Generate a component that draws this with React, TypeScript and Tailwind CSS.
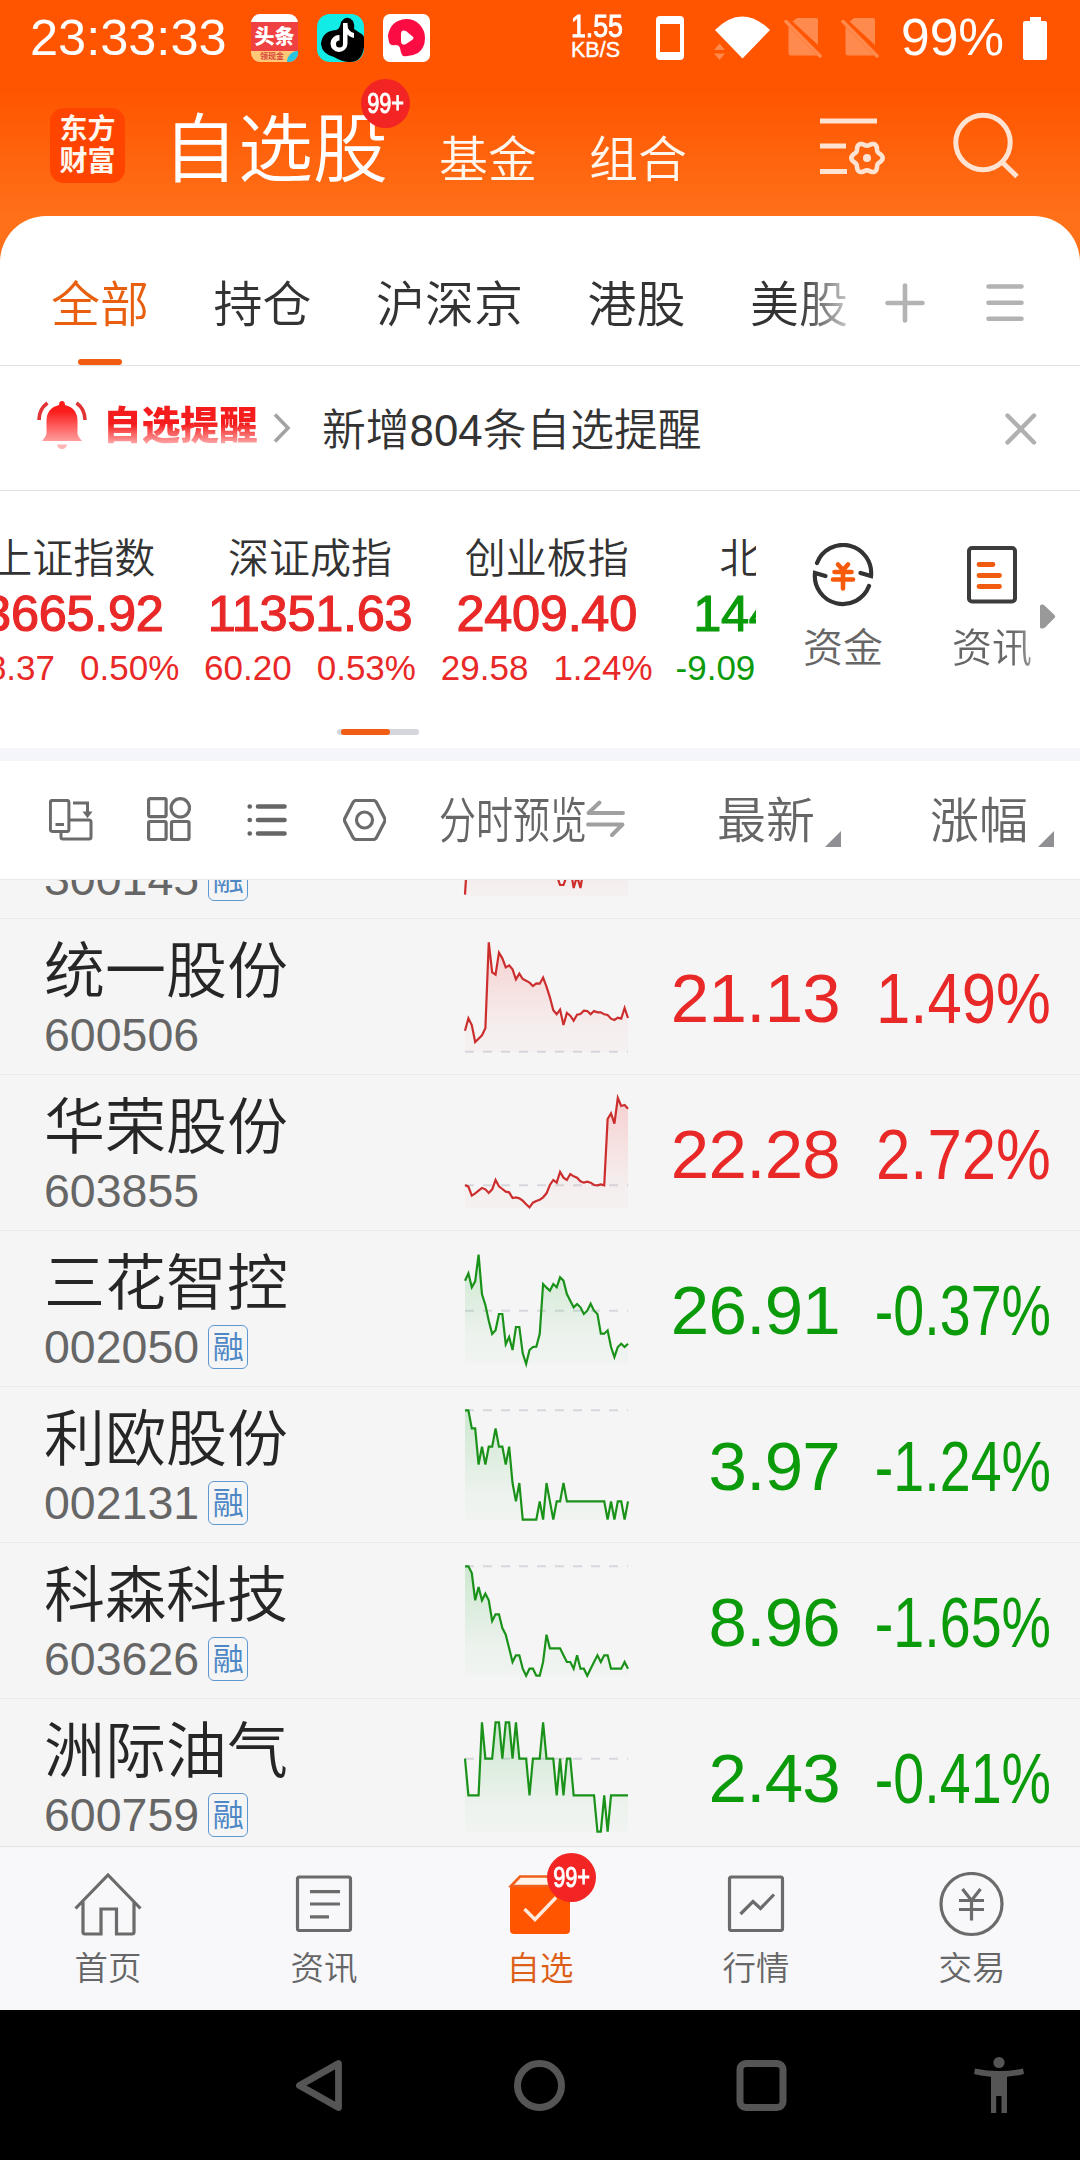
import type { ReactNode } from "react";

const rep = (value: number, count: number): number[] => Array(count).fill(value);

type Stock = {
  name: string;
  code: string;
  margin: boolean;
  price: string;
  change: string;
  up: boolean;
  base: number;
  series: number[];
};

// Series and base line are in thirds of a pixel, measured from the top of the chart.
const stocks: Stock[] = [
  {
    name: "统一股份", code: "600506", margin: false, price: "21.13", change: "1.49%", up: true, base: 329,
    series: [266, 229, 249, 300, 290, 280, 259, 1, 91, 98, 32, 49, 76, 70, 82, 112, 95, 111, 116, 122, 132, 124, 125, 107, 134, 166, 205, 217, 203, 249, 213, 221, 236, 218, 216, 206, 207, 217, 207, 211, 211, 217, 219, 230, 234, 227, 230, 198, 228],
  },
  {
    name: "华荣股份", code: "603855", margin: false, price: "22.28", change: "2.72%", up: true, base: 262,
    series: [261, 266, 293, 286, 278, 270, 274, 285, 274, 246, 265, 273, 281, 283, 300, 298, 301, 308, 319, 328, 314, 309, 305, 298, 286, 261, 246, 254, 222, 239, 246, 228, 235, 239, 250, 254, 251, 254, 261, 262, 259, 262, 63, 46, 77, 0, 24, 21, 32],
  },
  {
    name: "三花智控", code: "002050", margin: true, price: "26.91", change: "-0.37%", up: false, base: 170,
    series: [80, 58, 100, 82, 2, 121, 153, 200, 240, 229, 180, 180, 271, 249, 288, 219, 219, 298, 330, 288, 279, 278, 240, 90, 101, 110, 90, 100, 70, 80, 120, 140, 160, 150, 160, 180, 170, 149, 170, 180, 239, 239, 229, 279, 309, 279, 269, 279, 269],
  },
  {
    name: "利欧股份", code: "002131", margin: true, price: "3.97", change: "-1.24%", up: false, base: 1,
    series: [1, 1, 55, 55, 164, 110, 164, 110, 110, 55, 110, 110, 164, 110, 219, 274, 219, ...rep(329, 5), 274, 329, 219, 274, 329, 274, 274, 219, ...rep(274, 12), 329, 274, 329, 274, 274, 329, 274],
  },
  {
    name: "科森科技", code: "603626", margin: true, price: "8.96", change: "-1.65%", up: false, base: 1,
    series: [1, 1, 21, 103, 63, 103, 83, 103, 165, 145, 145, 186, 206, 247, 288, 268, 268, 308, 329, 308, 308, 329, 329, 288, 206, ...rep(247, 4), 268, 288, 288, 308, 268, 308, 308, 329, 308, 288, 268, 288, 268, 268, ...rep(308, 4), 288, 308],
  },
  {
    name: "洲际油气", code: "600759", margin: true, price: "2.43", change: "-0.41%", up: false, base: 110,
    series: [110, ...rep(220, 4), 1, ...rep(110, 3), 1, 1, 110, 1, 1, 110, 1, 110, 110, 110, 220, 110, 110, 110, 1, 110, 110, 110, 220, 110, 220, 110, 110, ...rep(220, 7), 329, 329, 220, 329, ...rep(220, 6)],
  },
];

const clippedStock: Stock = {
  name: "", code: "300145", margin: true, price: "", change: "", up: true, base: 60,
  series: [326, 160, ...rep(150, 25), 268, 297, 297, 268, 245, 306, 270, 306, 245, ...rep(180, 13)],
};

const indices = [
  { name: "上证指数", value: "3665.92", diff: "18.37", pct: "0.50%", up: true },
  { name: "深证成指", value: "11351.63", diff: "60.20", pct: "0.53%", up: true },
  { name: "创业板指", value: "2409.40", diff: "29.58", pct: "1.24%", up: true },
  { name: "北证50", value: "1447.50", diff: "-9.09", pct: "-0.62%", up: false },
];

function Sparkline({ id, series, base, up }: { id: string; series: number[]; base: number; up: boolean }) {
  const color = up ? "#cc2e2e" : "#1a921a";
  const line = series.map((v, i) => `${((i * 163) / (series.length - 1)).toFixed(2)},${(v / 3).toFixed(2)}`).join(" ");
  const top = Math.min(...series) / 3;
  return (
    <svg width="163" height="110" viewBox="0 0 163 110" className="overflow-visible">
      <defs>
        <linearGradient id={id} gradientUnits="userSpaceOnUse" x1="0" y1={top} x2="0" y2="110">
          <stop offset="0" stopColor={up ? "#ff3030" : "#20b030"} stopOpacity="0.19" />
          <stop offset="0.75" stopColor={up ? "#ff3030" : "#20b030"} stopOpacity="0.04" />
          <stop offset="1" stopColor={up ? "#ff3030" : "#20b030"} stopOpacity="0.02" />
        </linearGradient>
      </defs>
      <line x1="0" x2="163" y1={base / 3} y2={base / 3} stroke="#d6d8dd" strokeWidth="2" strokeDasharray="9 9" />
      <polygon points={`0,110 ${line} 163,110`} fill={`url(#${id})`} />
      <polyline points={line} fill="none" stroke={color} strokeWidth="2.2" strokeLinejoin="miter" />
    </svg>
  );
}

function StockRow({ stock }: { stock: Stock }) {
  const tone = stock.up ? "text-[#e92828]" : "text-[#0a9a0a]";
  const narrow = stock.change.length > 5 ? "scale-x-[0.8]" : "scale-x-[0.888]";
  return (
    <div className="flex h-[156px] shrink-0 items-start border-b border-[#ebebeb]">
      <div className="flex w-[465px] flex-col pl-[44px]">
        <div className="mt-[19px] h-[68px] text-[61px] leading-[68px] text-[#262626]">{stock.name}</div>
        <div className="mt-[6px] flex h-[46px] items-center gap-[9px]">
          <span className="text-[46.5px] leading-[46px] text-[#666]">{stock.code}</span>
          {stock.margin && (
            <span className="flex h-[44px] w-[40px] items-center justify-center rounded-[6px] border-[1.5px] border-[#5f97d3] text-[31px] leading-none font-normal text-[#4d87c6]">
              融
            </span>
          )}
        </div>
      </div>
      <div className="mt-[23px] w-[163px]">
        <Sparkline id={`fill-${stock.code}`} series={stock.series} base={stock.base} up={stock.up} />
      </div>
      <div className={`mt-[40px] w-[212px] text-right text-[69px] leading-[80px] tracking-[-0.700px] ${tone}`}>{stock.price}</div>
      <div className={`mt-[40px] flex w-[211px] origin-right justify-end text-[69.500px] leading-[80px] ${narrow} ${tone}`}>
        {stock.change}
      </div>
    </div>
  );
}

function Badge() {
  return (
    <span className="flex h-[49px] w-[49px] items-center justify-center rounded-full bg-[#f22424] text-[29px] leading-none text-white">
      <span className="scale-x-[0.75] [-webkit-text-stroke:1px_white]">99+</span>
    </span>
  );
}

function SimOff() {
  return (
    <svg width="40" height="42" viewBox="0 0 40 42" fill="none">
      <path d="M13 1h19q2 0 2 2v25L8.500 4.500zM5 10l28 28.500H7q-2.500 0-2.500-2.500V10z" fill="#ff8a4d" />
      <path d="M2 4.500 36 39" stroke="#ff8a4d" strokeWidth="3.500" strokeLinecap="round" />
    </svg>
  );
}

function StatusBar() {
  return (
    <div className="flex h-[76px] items-center pl-[30px] text-white">
      <span className="w-[221px] text-[50.500px] leading-none">23:33:33</span>
      <span className="flex h-[48px] w-[47px] flex-col overflow-hidden rounded-[9px] bg-[#f04142]">
        <span className="h-[8px] bg-white" />
        <span className="flex h-[29px] items-center justify-center text-[20px] leading-none font-black">头条</span>
        <span className="flex h-[11px] items-center bg-[#ffc978] pl-[9px] text-[8px] leading-none font-bold text-[#d8433a]">
          领现金
          <span className="ml-auto h-[12px] w-[11px] rounded-tl-full bg-[#28c4e0]" />
        </span>
      </span>
      <svg className="ml-[19px]" width="47" height="48" viewBox="0 0 47 48">
        <rect width="47" height="48" rx="13" fill="#11ece6" />
        <path d="M24 8q6-8 12-1 2 4 1 8l6 4q4 2 4 5v9Q45 48 33 48q-8 0-16-5Q5 40 4 30q1-13 15-14 4-1 5-8z" fill="#000" />
        <path
          d="M30.500 9v20.500a8.500 8.500 0 1 1-8-8.500v5.500a3.500 3.500 0 1 0 3.500 3.500V9z"
          fill="#fff"
        />
        <path d="M30 10q1 8 7 9v5q-5-1-8-5z" fill="#fff" />
      </svg>
      <svg className="ml-[19px]" width="47" height="48" viewBox="0 0 47 48">
        <rect width="47" height="48" rx="7" fill="#fff" />
        <path d="M23 5a18.500 18.500 0 0 1 19 19q0 10-7 15-7 4-15 3-2-2-3-8-1-3-4-3-6 1-7-3-1-4-1-7Q8 6 23 5z" fill="#fb0d44" />
        <path d="M18 20q0-5 5-3l6 5q3 2 0 4l-6 4q-4 2-5-2z" fill="#fff" />
      </svg>
      <span className="ml-[141px] flex w-[85px] flex-col pb-[4px]">
        <span className="w-[60px] origin-left scale-x-[0.86] text-[31px] leading-[28px] [font-kerning:none] [-webkit-text-stroke:1px_white]">1.55</span>
        <span className="text-[21.500px] leading-[19px] [-webkit-text-stroke:0.4px_white]">KB/S</span>
      </span>
      <svg width="28" height="44" viewBox="0 0 28 44">
        <path fillRule="evenodd" d="M4 0h20q4 0 4 4v36q0 4-4 4H4q-4 0-4-4V4q0-4 4-4zm0 8v28h20V8z" fill="#fff" />
      </svg>
      <svg className="ml-[29px]" width="58" height="44" viewBox="0 0 58 44">
        <path d="M2 14q27-27 55 0L29.500 42.500z" fill="#fff" />
        <path d="M1 34l5.500-6.500L12 34zM1 37.500h11L6.500 44z" fill="#ff8a4d" />
      </svg>
      <span className="ml-[13px] flex gap-[17px]">
        <SimOff />
        <SimOff />
      </span>
      <span className="ml-[20px] w-[122px] text-[51.500px] leading-none">99%</span>
      <svg width="24" height="43" viewBox="0 0 24 43">
        <path d="M7 0h11v4h4q2 0 2 2v35q0 2-2 2H2q-2 0-2-2V6q0-2 2-2h5z" fill="#fff" />
      </svg>
    </div>
  );
}

// Closed six-lobed outline around (cx, cy).
const gearPath = (cx: number, cy: number): string => {
  const points = Array.from({ length: 72 }, (_, i) => {
    const t = (i * Math.PI) / 36;
    const r = 14 + 1.7 * Math.cos(6 * t);
    return `${(cx + r * Math.cos(t)).toFixed(2)} ${(cy + r * Math.sin(t)).toFixed(2)}`;
  });
  return `M${points.join("L")}Z`;
};

function AppBar() {
  return (
    <div className="flex h-[140px] items-start text-[49px] text-[#fff6ee]">
      <div className="mt-[32px] ml-[50px] flex h-[75px] w-[75px] flex-col items-center justify-center rounded-[14px] bg-[#ff4400] text-[28px] leading-[32px] font-bold">
        <span>东方</span>
        <span>财富</span>
      </div>
      <div className="relative mt-[34px] ml-[38px] text-[75px] leading-[80px] text-white">
        自选股
        <span className="absolute top-[-31px] left-[198px]">
          <Badge />
        </span>
      </div>
      <span className="mt-[54px] ml-[51px] leading-[60px]">基金</span>
      <span className="mt-[54px] ml-[52px] leading-[60px]">组合</span>
      <svg className="mt-[40px] ml-[133px]" width="70" height="64" viewBox="0 0 70 64" fill="none" stroke="#ffe3d2" strokeWidth="5">
        <path d="M0 5h57M0 30h26M0 55.500h27" />
        <path d={gearPath(47, 42)} strokeWidth="4.600" strokeLinejoin="round" />
        <circle cx="47" cy="42" r="4" fill="#ffe3d2" stroke="none" />
      </svg>
      <svg className="mt-[36px] ml-[63px]" width="68" height="68" viewBox="0 0 68 68" fill="none" stroke="#ffe3d2" strokeWidth="5">
        <circle cx="30" cy="30.500" r="27.200" />
        <path d="M49.500 50.500 64 64.500" />
      </svg>
    </div>
  );
}

function CategoryTabs() {
  return (
    <div className="flex h-[150px] items-start border-b border-[#e1e1e1] text-[49px] leading-[60px] text-[#333]">
      <div className="flex w-[846px] gap-[64.500px] overflow-hidden pl-[51px] whitespace-nowrap">
        <div className="flex h-[150px] shrink-0 flex-col items-center pt-[59px] text-[#e8600f]">
          全部
          <span className="mt-[24px] h-[6px] w-[44px] rounded-full bg-[#f25c10]" />
        </div>
        <span className="shrink-0 pt-[59px]">持仓</span>
        <span className="shrink-0 pt-[59px]">沪深京</span>
        <span className="shrink-0 pt-[59px]">港股</span>
        <span className="shrink-0 bg-[linear-gradient(to_right,#333_50%,#bbb_95%)] bg-clip-text pt-[59px] text-transparent">美股</span>
      </div>
      <svg className="mt-[67px] ml-[39px]" width="40" height="40" viewBox="0 0 40 40" stroke="#b3b3b3" strokeWidth="4.600" strokeLinecap="round">
        <path d="M2.500 20h35M20 2.500v35" />
      </svg>
      <svg className="mt-[67px] ml-[61px]" width="38" height="40" viewBox="0 0 38 40" stroke="#b3b3b3" strokeWidth="4.600" strokeLinecap="round">
        <path d="M2.500 3.500h33M2.500 19.700h33M2.500 35.700h33" />
      </svg>
    </div>
  );
}

function ReminderBar() {
  return (
    <div className="flex h-[125px] items-start border-b border-[#e1e1e1]">
      <svg className="mt-[35px] ml-[37px]" width="50" height="48" viewBox="0 0 50 48" fill="none">
        <defs>
          <linearGradient id="bell" x1="0" y1="0" x2="0" y2="1">
            <stop offset="0.250" stopColor="#fb1c1c" />
            <stop offset="1" stopColor="#ff9d9d" />
          </linearGradient>
        </defs>
        <path d="M22 4q0-4 3-4t3 4q12 3 12.500 15v13q0 3 4.500 8H5q4.500-5 4.500-8V19Q10 7 22 4z" fill="url(#bell)" />
        <path d="M20 43.500h10q-1 4.500-5 4.500t-5-4.500z" fill="#ffb5b5" />
        <path d="M2 19Q2 8 10.500 2M48 19Q48 8 39.500 2" stroke="#e23434" strokeWidth="3.600" />
      </svg>
      <span className="mt-[37px] ml-[16px] w-[156px] bg-[linear-gradient(#f41c1c_45%,#ffa5a5_88%)] bg-clip-text text-[38.700px] leading-[46px] font-black text-transparent">
        自选提醒
      </span>
      <svg className="mt-[47px] ml-[14px]" width="18" height="30" viewBox="0 0 18 30" fill="none" stroke="#a3a3a3" strokeWidth="3.600">
        <path d="M2 1.500 15 15 2 28.500" />
      </svg>
      <span className="mt-[38px] ml-[31px] w-[683px] text-[43.800px] leading-[54px] text-[#333]">新增804条自选提醒</span>
      <svg className="mt-[47px]" width="32" height="32" viewBox="0 0 32 32" stroke="#b0b0b0" strokeWidth="4.400" strokeLinecap="round">
        <path d="M2.500 2.500 29 29.500M29 2.500 2.500 29.500" />
      </svg>
    </div>
  );
}

function FundIcon() {
  return (
    <svg width="62" height="64" viewBox="0 0 62 64" fill="none">
      <path d="M5 20A28 28 0 0 1 59 33l-10.500-3M57 43A28 28 0 0 1 3 30l10.500 3" stroke="#333" strokeWidth="4.200" strokeLinejoin="miter" strokeLinecap="round" />
      <path d="M26 21.500 31 27l5-5.500M22.500 29h17M21 36.500h20M31 28v17.500" stroke="#f65a0a" strokeWidth="4.600" strokeLinecap="round" />
    </svg>
  );
}

function IndexStrip() {
  return (
    <div className="flex h-[270px] flex-col border-b-[13px] border-[#f5f6f9]">
      <div className="flex h-[238px] items-start">
        <div className="flex w-[756px] overflow-hidden">
          <div className="ml-[-45px] flex shrink-0">
            {indices.map((q) => (
              <div key={q.name} className={`flex w-[236.700px] flex-col items-center whitespace-nowrap ${q.up ? "text-[#e92828]" : "text-[#0a9a0a]"}`}>
                <span className="mt-[43px] text-[41px] leading-[50px] text-[#333]">{q.name}</span>
                <span className="mt-[5px] text-[50.500px] leading-[50px] tracking-[-0.300px] [-webkit-text-stroke:1.200px_currentColor]">{q.value}</span>
                <span className="mt-[7px] flex gap-[25px] text-[35px] leading-[44px]">
                  <span>{q.diff}</span>
                  <span>{q.pct}</span>
                </span>
              </div>
            ))}
          </div>
        </div>
        <div className="mt-[52px] ml-[47px] flex w-[80px] flex-col items-center text-[40px] leading-[50px] text-[#666]">
          <FundIcon />
          <span className="mt-[16px]">资金</span>
        </div>
        <div className="mt-[52px] ml-[69px] flex w-[80px] flex-col items-center text-[40px] leading-[50px] text-[#666]">
          <svg width="50" height="64" viewBox="0 0 50 64" fill="none">
            <rect x="2" y="5" width="46" height="53.500" rx="3" stroke="#3c3c3c" strokeWidth="4" />
            <path d="M12 21.500h14M12 32.500h20.500M12 43.500h20.500" stroke="#f25c10" strokeWidth="4.800" strokeLinecap="round" />
          </svg>
          <span className="mt-[16px] bg-[linear-gradient(to_right,#666_75%,#999)] bg-clip-text text-transparent">资讯</span>
        </div>
        <svg className="mt-[113px] ml-[8px]" width="16" height="25" viewBox="0 0 16 25">
          <path d="M0 2q0-2 3-1.500L5 2l9.500 9q1.500 1.500 0 3L5 23.500 3 24.500Q0 25 0 23z" fill="#999" />
        </svg>
      </div>
      <div className="ml-[337px] flex h-[6px] w-[82px] rounded-full bg-[#d3d6da] pl-[4px]">
        <span className="h-[6px] w-[49px] rounded-full bg-[#f05c12]" />
      </div>
    </div>
  );
}

function SortCorner() {
  return (
    <svg width="16" height="16" viewBox="0 0 16 16">
      <path d="M16 0v16H0z" fill="#8f8f94" />
    </svg>
  );
}

function ListToolbar() {
  return (
    <div className="flex h-[119px] items-start border-b border-[#e9e9e9] text-[49px] leading-[60px] text-[#666]">
      <svg className="mt-[38px] ml-[49px]" width="44" height="42" viewBox="0 0 44 42" fill="none" stroke="#6b6b6b" strokeWidth="3">
        <rect x="1.400" y="1.400" width="18.500" height="31" rx="2" />
        <path d="M6.500 25.500h8.500M12 33v5q0 2 2 2h26q2 0 2-2V23q0-2-2-2H20.500M24 4h14.500v12" />
        <path d="M35.500 13.500h6l-3 4z" fill="#6b6b6b" strokeWidth="2" />
      </svg>
      <svg className="mt-[36px] ml-[54px]" width="44" height="44" viewBox="0 0 44 44" fill="none" stroke="#6b6b6b" strokeWidth="3.200">
        <rect x="1.600" y="1.600" width="17.500" height="18" rx="1.500" />
        <circle cx="33.300" cy="10.800" r="9.200" />
        <rect x="1.600" y="24.500" width="17.500" height="18" rx="1.500" />
        <rect x="24.500" y="24.500" width="17.500" height="18" rx="1.500" />
      </svg>
      <svg className="mt-[42px] ml-[56px]" width="40" height="34" viewBox="0 0 40 34" fill="none" stroke="#666" strokeWidth="4.600" strokeLinecap="round">
        <path d="M11 3.500h26.500M11 17h26.500M11 30.500h26.500M2.700 3.500h.1M2.700 17h.1M2.700 30.500h.1" />
      </svg>
      <svg className="mt-[38px] ml-[56px]" width="43" height="42" viewBox="0 0 43 42" fill="none" stroke="#6b6b6b" strokeWidth="3.200" strokeLinejoin="round">
        <path d="M13 1.500h17.500q2 0 3 2l8 15.500q1 2 0 4l-8 15.500q-1 2-3 2H13q-2 0-3-2L2 23q-1-2 0-4l8-15.500q1-2 3-2z" />
        <circle cx="21.500" cy="21" r="8" />
      </svg>
      <span className="mt-[30px] ml-[53px] w-[147px] origin-left scale-x-[0.755] whitespace-nowrap">分时预览</span>
      <svg className="mt-[39px]" width="40" height="37" viewBox="0 0 40 37" fill="none" stroke="#a0a0a0" strokeWidth="3.900" strokeLinecap="round" strokeLinejoin="round">
        <path d="M37 13H2.500L13.500 2.500M2 24.500h34.500L26 35" />
      </svg>
      <span className="mt-[30px] ml-[91px] w-[108px]">最新</span>
      <span className="mt-[70px] leading-none">
        <SortCorner />
      </span>
      <span className="mt-[30px] ml-[89px] w-[108px]">涨幅</span>
      <span className="mt-[70px] leading-none">
        <SortCorner />
      </span>
    </div>
  );
}

function NavItem({ label, active, children }: { label: string; active?: boolean; children: ReactNode }) {
  return (
    <div className={`flex w-[216px] flex-col items-center text-[33.500px] leading-[44px] ${active ? "text-[#dd5f17]" : "text-[#666]"}`}>
      <div className="relative mt-[25px] h-[66px] w-[68px]">{children}</div>
      <span className="mt-[9px]">{label}</span>
    </div>
  );
}

function BottomNav() {
  return (
    <div className="flex h-[164px] border-t border-[#e2e2e4] bg-[#f8f8fa]">
      <NavItem label="首页">
        <svg width="68" height="66" viewBox="0 0 68 66" fill="none" stroke="#6b6b6b" strokeWidth="3.200">
          <path d="M1.500 36.500 34 3l32.500 33.500M9 30v30q0 2 2 2h16V37h15.500v25H58q2 0 2-2V30" />
        </svg>
      </NavItem>
      <NavItem label="资讯">
        <svg width="68" height="66" viewBox="0 0 68 66" fill="none" stroke="#6b6b6b" strokeWidth="3.200">
          <rect x="7.500" y="5" width="53" height="53.500" rx="2" />
          <path d="M20 19.700h30M20 32h30M20 44.800h19" />
        </svg>
      </NavItem>
      <NavItem label="自选" active>
        <svg width="68" height="66" viewBox="0 0 68 66" fill="none">
          <path d="M4 14h60v44q0 4-4 4H8q-4 0-4-4z" fill="#ff5500" />
          <path d="M5 14 14 4.500h42L64 14z" fill="#fff3ea" stroke="#f0601a" strokeWidth="2.600" />
          <path d="M18.500 37 29 47.500 50 25.500" stroke="#ffeadb" strokeWidth="3.400" />
        </svg>
        <span className="absolute top-[-19px] left-[41px]">
          <Badge />
        </span>
      </NavItem>
      <NavItem label="行情">
        <svg width="68" height="66" viewBox="0 0 68 66" fill="none" stroke="#6b6b6b" strokeWidth="3.200">
          <rect x="7.500" y="5" width="53" height="53.500" rx="2" />
          <path d="M18.500 42 31 29.500l7.500 7L52 22.500" />
        </svg>
      </NavItem>
      <NavItem label="交易">
        <svg width="68" height="66" viewBox="0 0 68 66" fill="none" stroke="#6b6b6b" strokeWidth="3.200">
          <circle cx="33.500" cy="32" r="30.500" />
          <path d="M24.500 17 33.500 28.500 42.500 17M21 28.500h25M21 37.500h25M33.500 28v20.500" />
        </svg>
      </NavItem>
    </div>
  );
}

function SystemNav() {
  return (
    <div className="flex h-[150px] items-start bg-black pt-[46px]">
      <svg className="ml-[294px]" width="50" height="60" viewBox="0 0 50 60" fill="none" stroke="#555" strokeWidth="6.800" strokeLinejoin="round">
        <path d="M44.500 7.500v44L5.500 29.500z" />
      </svg>
      <svg className="ml-[170px]" width="52" height="60" viewBox="0 0 52 60" fill="none" stroke="#555" strokeWidth="7">
        <circle cx="25.500" cy="29.500" r="22" />
      </svg>
      <svg className="ml-[170px]" width="52" height="60" viewBox="0 0 52 60" fill="none" stroke="#555" strokeWidth="7">
        <rect x="4" y="7.500" width="43" height="44" rx="6" />
      </svg>
      <svg className="ml-[186px]" width="50" height="60" viewBox="0 0 50 60" fill="#555">
        <circle cx="25" cy="6.500" r="5.600" />
        <path d="M1 12.500q24 5 48 0l1 5.500q-8 2-17 2.800V57h-5.500V40h-5.300v17H17V20.800Q8 20 0 18z" />
      </svg>
    </div>
  );
}

export default function App() {
  return (
    <div className="flex h-[2160px] w-[1080px] flex-col overflow-hidden bg-[linear-gradient(#ff5500_90px,#ff7019_216px)] font-['Liberation_Sans','Noto_Sans_CJK_SC',sans-serif] font-[350]">
      <StatusBar />
      <AppBar />
      <div className="flex flex-col overflow-hidden rounded-t-[46px] bg-white">
        <CategoryTabs />
        <ReminderBar />
        <IndexStrip />
        <ListToolbar />
        <div className="flex h-[966px] flex-col overflow-hidden bg-[#f5f5f5]">
          <div className="flex h-[39px] shrink-0 flex-col justify-end overflow-hidden">
            <StockRow stock={clippedStock} />
          </div>
          {stocks.map((s) => (
            <StockRow key={s.code} stock={s} />
          ))}
        </div>
        <BottomNav />
      </div>
      <SystemNav />
    </div>
  );
}
